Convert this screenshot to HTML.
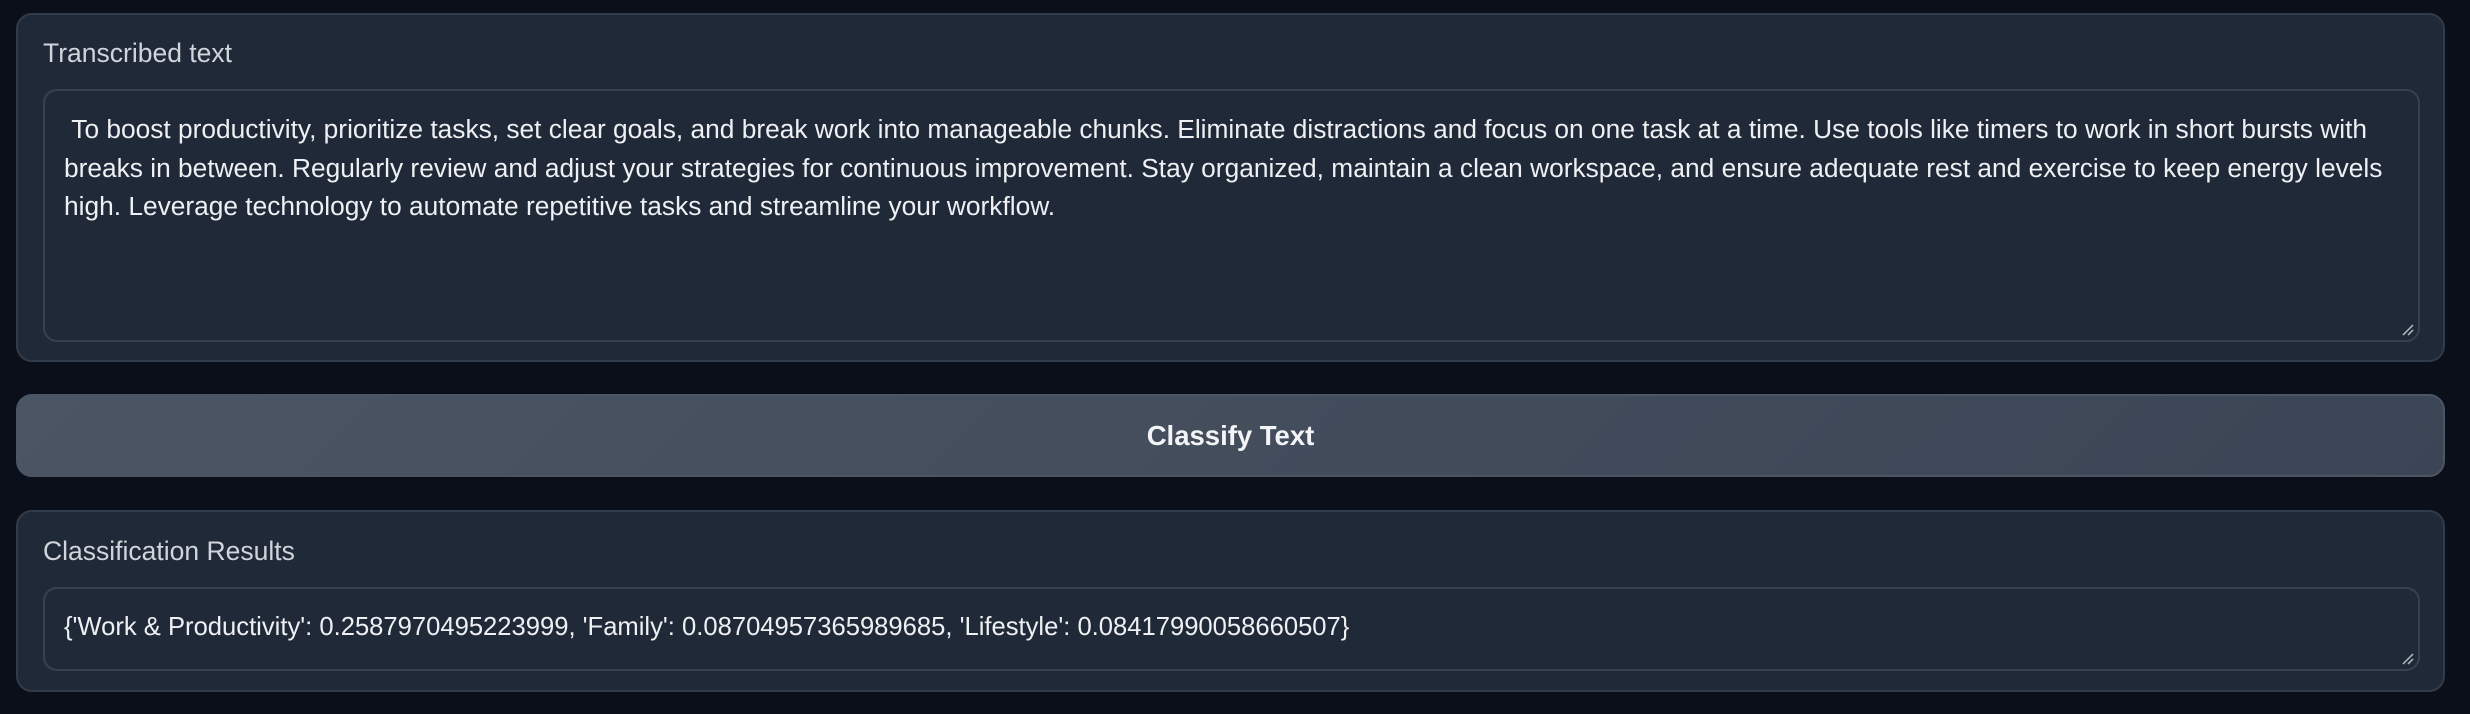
<!DOCTYPE html>
<html><head><meta charset="utf-8"><style>
html,body{margin:0;padding:0;width:2470px;height:714px;background:#0b0f19;overflow:hidden;font-family:"Liberation Sans",sans-serif;color:#e5e7eb}
.panel{position:absolute;left:16px;width:2429px;background:#1f2937;border:2px solid #313b4a;border-radius:16px;box-sizing:border-box}
.label{position:absolute;left:25px;font-size:26.5px;color:#d1d5db}
.box{position:absolute;left:25px;width:2377px;background:#1f2937;border:2px solid #374151;border-radius:14px;box-sizing:border-box;white-space:nowrap;color:#eef0f3}
.grip{position:absolute;right:4px;bottom:4px;width:12px;height:12px}
.btn{position:absolute;left:16px;top:394px;width:2429px;height:83px;border-radius:16px;border:2px solid #4b5563;box-sizing:border-box;background:linear-gradient(135deg,#4b5563,#3b4555);text-align:center;line-height:79px;font-size:27.5px;font-weight:bold;color:#f3f4f6}
</style></head><body>
<div class="panel" style="top:13px;height:349px">
  <div class="label" style="top:23px">Transcribed text</div>
  <div class="box" style="top:74px;height:253px">
    <div style="position:absolute;left:19px;top:19px;line-height:38.5px;font-size:26.3px">&nbsp;To boost productivity, prioritize tasks, set clear goals, and break work into manageable chunks. Eliminate distractions and focus on one task at a time. Use tools like timers to work in short bursts with<br>breaks in between. Regularly review and adjust your strategies for continuous improvement. Stay organized, maintain a clean workspace, and ensure adequate rest and exercise to keep energy levels<br>high. Leverage technology to automate repetitive tasks and streamline your workflow.</div>
    <svg class="grip" viewBox="0 0 12 12"><path d="M1 11L11 1M6 11L11 6" stroke="#b8bcc4" stroke-width="1.5"/></svg>
  </div>
</div>
<div class="btn">Classify Text</div>
<div class="panel" style="top:510px;height:182px">
  <div class="label" style="top:24px">Classification Results</div>
  <div class="box" style="top:75px;height:84px">
    <div style="position:absolute;left:19px;top:23px;line-height:30px;font-size:25.6px">{'Work &amp; Productivity': 0.2587970495223999, 'Family': 0.08704957365989685, 'Lifestyle': 0.08417990058660507}</div>
    <svg class="grip" viewBox="0 0 12 12"><path d="M1 11L11 1M6 11L11 6" stroke="#b8bcc4" stroke-width="1.5"/></svg>
  </div>
</div>
</body></html>
